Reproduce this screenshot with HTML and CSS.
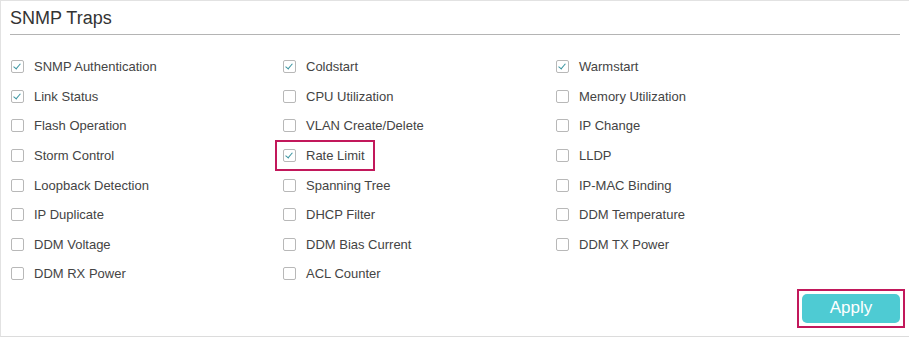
FILE: index.html
```html
<!DOCTYPE html>
<html lang="en">
<head>
  <meta charset="UTF-8" />
  <title>SNMP Traps</title>
  <link rel="stylesheet" href="styles.css">
</head>
<body>
  <div class="panel">
    <h2 class="panel-title">SNMP Traps</h2>

    <div class="traps">
      <label class="trap"><span class="box checked"></span>SNMP Authentication</label>
      <label class="trap"><span class="box checked"></span>Coldstart</label>
      <label class="trap"><span class="box checked"></span>Warmstart</label>

      <label class="trap"><span class="box checked"></span>Link Status</label>
      <label class="trap"><span class="box"></span>CPU Utilization</label>
      <label class="trap"><span class="box"></span>Memory Utilization</label>

      <label class="trap"><span class="box"></span>Flash Operation</label>
      <label class="trap"><span class="box"></span>VLAN Create/Delete</label>
      <label class="trap"><span class="box"></span>IP Change</label>

      <label class="trap"><span class="box"></span>Storm Control</label>
      <label class="trap marked"><span class="box checked"></span>Rate Limit</label>
      <label class="trap"><span class="box"></span>LLDP</label>

      <label class="trap"><span class="box"></span>Loopback Detection</label>
      <label class="trap"><span class="box"></span>Spanning Tree</label>
      <label class="trap"><span class="box"></span>IP-MAC Binding</label>

      <label class="trap"><span class="box"></span>IP Duplicate</label>
      <label class="trap"><span class="box"></span>DHCP Filter</label>
      <label class="trap"><span class="box"></span>DDM Temperature</label>

      <label class="trap"><span class="box"></span>DDM Voltage</label>
      <label class="trap"><span class="box"></span>DDM Bias Current</label>
      <label class="trap"><span class="box"></span>DDM TX Power</label>

      <label class="trap"><span class="box"></span>DDM RX Power</label>
      <label class="trap"><span class="box"></span>ACL Counter</label>
    </div>

    <div class="actions">
      <span class="mark-frame">
        <button type="button" class="btn-apply">Apply</button>
      </span>
    </div>
  </div>
</body>
</html>
```

FILE: styles.css
```css
body { margin: 0; font-family: "Liberation Sans", Arial, sans-serif; background: #fff; color: #444; }

.panel {
  height: 337px;
  border-top: 1px solid #e2e2e2;
  border-left: 1px solid #e2e2e2;
  border-bottom: 1px solid #dcdcdc;
  box-sizing: border-box;
  padding: 0 9px 0 9px;
}

.panel-title {
  margin: 0;
  font-size: 18px;
  font-weight: normal;
  color: #333;
  line-height: 20px;
  padding-top: 7px;
  padding-bottom: 6px;
  border-bottom: 1px solid #b4b4b4;
}

.traps {
  display: grid;
  grid-template-columns: 272px 273px 1fr;
  grid-auto-rows: 29.6px;
  padding: 17px 0 0 1px;
}

.trap {
  justify-self: start;
  display: flex;
  align-items: center;
  font-size: 13px;
  color: #444;
  cursor: pointer;
}

.box {
  width: 13px;
  height: 13px;
  box-sizing: border-box;
  border: 1px solid #b8b8b8;
  border-radius: 2px;
  margin-right: 10px;
  position: relative;
}

.box.checked::after {
  content: "";
  position: absolute;
  left: 3px;
  top: 1px;
  width: 3px;
  height: 6px;
  border-right: 1.4px solid #3a94a0;
  border-bottom: 1.4px solid #3a94a0;
  transform: rotate(40deg);
}

.trap.marked { position: relative; }
.trap.marked::before {
  content: "";
  position: absolute;
  left: -8px;
  right: -10px;
  top: -1px;
  bottom: -1px;
  border: 2px solid #c2185b;
}

.actions {
  display: flex;
  justify-content: flex-end;
  margin-top: 0;
}

.mark-frame {
  display: flex;
  padding: 3px;
  border: 2px solid #c2185b;
  margin-right: -5px;
}

.btn-apply {
  width: 98px;
  height: 29px;
  border: none;
  border-radius: 5px;
  background: #4ecbd3;
  color: #fff;
  font-family: "Liberation Sans", Arial, sans-serif;
  font-size: 17px;
  cursor: pointer;
}
```
